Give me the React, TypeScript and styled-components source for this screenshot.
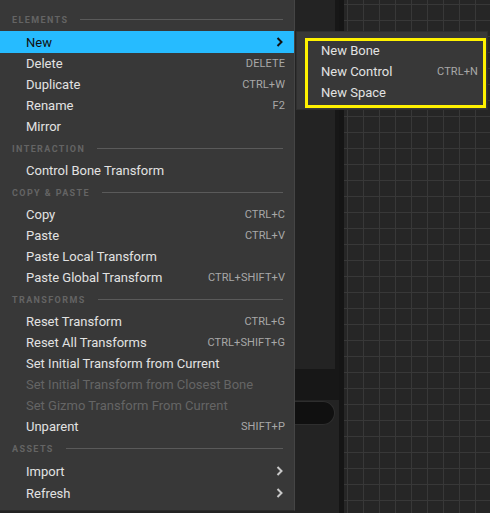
import React from "react";
import styled, { createGlobalStyle } from "styled-components";

const Global = createGlobalStyle`
  html, body { margin: 0; padding: 0; background: #242424; }
  body { font-family: Roboto, "Noto Sans", "Liberation Sans", sans-serif; }
`;

const Page = styled.div`
  position: relative;
  width: 490px;
  height: 513px;
  overflow: hidden;
  display: flex;
  background: #242424;
`;

const SidePanel = styled.div`
  width: 339px;
  display: flex;
  flex-direction: column;
  background: #242424;
`;

const PanelBody = styled.div`
  height: 369px;
  background: #232323;
  border-right: 4px solid #171717;
  box-sizing: border-box;
`;

const DarkStrip = styled.div`
  height: 31px;
  background: #171717;
`;

const FieldRow = styled.div`
  flex: 1;
  padding: 1px 4px 0 0;
  background: #232323;
`;

const Field = styled.div`
  height: 22px;
  background: #101010;
  border: 1px solid #2e2e2e;
  border-left: none;
  border-radius: 0 12px 12px 0;
`;

const Separator = styled.div`
  width: 5px;
  background: #151515;
`;

const Canvas = styled.div`
  flex: 1;
  background-color: #262626;
  background-image:
    linear-gradient(to right, #383838 1px, transparent 1px),
    linear-gradient(to bottom, #383838 1px, transparent 1px);
  background-size: 16px 16px;
  background-position: 3px 4px;
`;

const Menu = styled.div`
  position: absolute;
  left: 0;
  top: 0;
  width: 295px;
  height: 511px;
  box-sizing: border-box;
  padding-top: 8px;
  background: #383838;
  border-right: 1px solid #454545;
  border-bottom: 1px solid #2a2a2a;
  display: flex;
  flex-direction: column;
`;

const Header = styled.div`
  height: 23px;
  display: flex;
  align-items: center;
  gap: 12px;
  padding: 0 11px 0 12px;
  font-size: 9px;
  font-weight: 700;
  letter-spacing: 1.4px;
  color: #646464;
  &::after {
    content: "";
    flex: 1;
    height: 1px;
    background: #5a5a5a;
  }
`;

const Row = styled.div<{ $active?: boolean; $disabled?: boolean; $tall?: boolean }>`
  height: ${(p) => (p.$tall ? 22 : 21)}px;
  display: flex;
  align-items: center;
  padding: 0 9px 0 26px;
  font-size: 13px;
  background: ${(p) => (p.$active ? "#26bbff" : "transparent")};
  color: ${(p) => (p.$active ? "#111111" : p.$disabled ? "#656565" : "#e2e2e2")};
`;

const Label = styled.span`
  flex: 1;
  white-space: nowrap;
`;

const Shortcut = styled.span`
  font-size: 11px;
  color: #a8a8a8;
  letter-spacing: 0.1px;
`;

const SubMenu = styled.div`
  position: absolute;
  left: 296px;
  top: 31px;
  width: 192px;
  height: 79px;
  box-sizing: border-box;
  padding-top: 8px;
  background: #383838;
  border: 1px solid #2f2f2f;
  display: flex;
  flex-direction: column;
`;

const SubRow = styled.div`
  height: 21px;
  display: flex;
  align-items: center;
  padding: 0 9px 0 24px;
  font-size: 13px;
  color: #e2e2e2;
`;

const Callout = styled.div`
  position: absolute;
  left: 305px;
  top: 38px;
  width: 181px;
  height: 70px;
  box-sizing: border-box;
  border: 3px solid #fff200;
  pointer-events: none;
`;

const Chevron = ({ dark }: { dark?: boolean }) => (
  <svg width="7" height="10" viewBox="0 0 7 10" style={{ marginRight: 2 }}>
    <polyline
      points="1.5,1 5.5,5 1.5,9"
      fill="none"
      stroke={dark ? "#111" : "#c8c8c8"}
      strokeWidth="2"
    />
  </svg>
);

type Item = {
  label: string;
  shortcut?: string;
  sub?: boolean;
  active?: boolean;
  disabled?: boolean;
};

const sections: { title: string; items: Item[] }[] = [
  {
    title: "ELEMENTS",
    items: [
      { label: "New", sub: true, active: true },
      { label: "Delete", shortcut: "DELETE" },
      { label: "Duplicate", shortcut: "CTRL+W" },
      { label: "Rename", shortcut: "F2" },
      { label: "Mirror" },
    ],
  },
  { title: "INTERACTION", items: [{ label: "Control Bone Transform" }] },
  {
    title: "COPY & PASTE",
    items: [
      { label: "Copy", shortcut: "CTRL+C" },
      { label: "Paste", shortcut: "CTRL+V" },
      { label: "Paste Local Transform" },
      { label: "Paste Global Transform", shortcut: "CTRL+SHIFT+V" },
    ],
  },
  {
    title: "TRANSFORMS",
    items: [
      { label: "Reset Transform", shortcut: "CTRL+G" },
      { label: "Reset All Transforms", shortcut: "CTRL+SHIFT+G" },
      { label: "Set Initial Transform from Current" },
      { label: "Set Initial Transform from Closest Bone", disabled: true },
      { label: "Set Gizmo Transform From Current", disabled: true },
      { label: "Unparent", shortcut: "SHIFT+P" },
    ],
  },
  {
    title: "ASSETS",
    items: [
      { label: "Import", sub: true },
      { label: "Refresh", sub: true },
    ],
  },
];

const subItems: Item[] = [
  { label: "New Bone" },
  { label: "New Control", shortcut: "CTRL+N" },
  { label: "New Space" },
];

export default function App() {
  return (
    <>
      <Global />
      <Page>
        <SidePanel>
          <PanelBody />
          <DarkStrip />
          <FieldRow>
            <Field />
          </FieldRow>
        </SidePanel>
        <Separator />
        <Canvas />

        <Menu>
          {sections.map((s) => (
            <React.Fragment key={s.title}>
              <Header>{s.title}</Header>
              {s.items.map((it) => (
                <Row
                  key={it.label}
                  $active={it.active}
                  $disabled={it.disabled}
                  $tall={it.sub}
                >
                  <Label>{it.label}</Label>
                  {it.shortcut && <Shortcut>{it.shortcut}</Shortcut>}
                  {it.sub && <Chevron dark={it.active} />}
                </Row>
              ))}
            </React.Fragment>
          ))}
        </Menu>

        <SubMenu>
          {subItems.map((it) => (
            <SubRow key={it.label}>
              <Label>{it.label}</Label>
              {it.shortcut && <Shortcut>{it.shortcut}</Shortcut>}
            </SubRow>
          ))}
        </SubMenu>
        <Callout />
      </Page>
    </>
  );
}
